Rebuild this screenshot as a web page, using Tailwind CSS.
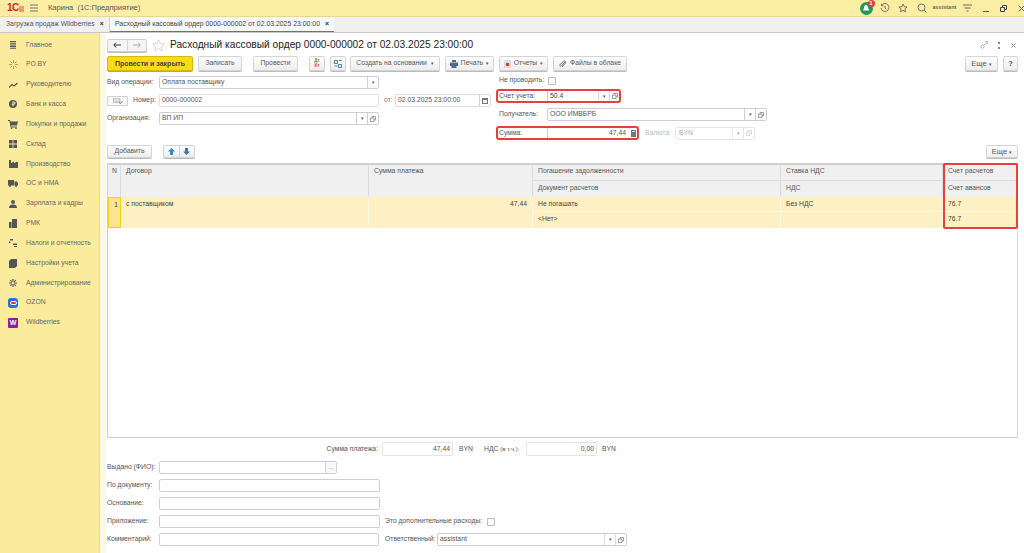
<!DOCTYPE html>
<html lang="ru">
<head>
  <meta charset="UTF-8" />
  <title>Расходный кассовый ордер</title>
  <script src="https://cdn.jsdelivr.net/npm/@tailwindcss/browser@4"></script>
</head>
<body class="w-[1024px] h-[553px] overflow-hidden bg-white flex flex-col font-['Liberation_Sans',Arial,sans-serif] text-[6.8px] leading-none whitespace-nowrap text-[#555]">

  <!-- Top bar -->
  <header class="h-[17px] shrink-0 bg-[#fbeea3] border-b border-[#e6d98f] flex items-center">
    <div class="w-[27px] pl-[7px] flex items-center">
      <span class="text-[#e2231a] font-bold text-[10px] tracking-[-0.5px]">1С</span>
      <svg class="w-[5px] h-[7px]" viewBox="0 0 5 7" fill="none" stroke="#e2231a" stroke-width="0.8"><path d="M0 2h5M0 4h5M0 6h5"/></svg>
    </div>
    <svg class="w-[10px] h-[8px] text-[#777] ml-[2px]" viewBox="0 0 10 8" fill="none" stroke="currentColor"><path d="M1 1h8M1 4h8M1 7h8"/></svg>
    <span class="ml-[9px] text-[7.5px] text-[#555]">Карина&nbsp; (1С:Предприятие)</span>
    <div class="ml-auto flex items-center h-full">
      <div class="relative w-[13px] h-[13px] rounded-full bg-[#1d9a5b] flex items-center justify-center mr-[7px]">
        <svg class="w-[8px] h-[8px]" viewBox="0 0 8 8" fill="#fff"><path d="M4 1C5.500 1 6 2.500 6 4l1.500 2.500H1L2 4C2 2.500 2.500 1 4 1z"/></svg>
        <span class="absolute -top-[2px] -right-[2px] w-[7px] h-[7px] rounded-full bg-[#e53935] text-white text-[6px] font-bold flex items-center justify-center">1</span>
      </div>
      <svg class="w-[10px] h-[10px] mr-[8px]" viewBox="0 0 10 10" fill="none" stroke="#666" stroke-width="0.9"><path d="M1.500 2.500A4 4 0 1 1 1 5M1.500 .8v2h2M5 2.800V5l1.500 1"/></svg>
      <svg class="w-[10px] h-[10px] mr-[9px]" viewBox="0 0 10 10" fill="none" stroke="#666" stroke-width="0.9"><path d="M5 1l1.200 2.700 2.900.3-2.200 1.900.7 2.900L5 7.300 2.400 8.800l.7-2.900L.9 4l2.900-.3z"/></svg>
      <svg class="w-[10px] h-[10px] mr-[6px]" viewBox="0 0 10 10" fill="none" stroke="#666" stroke-width="0.9"><circle cx="4.500" cy="4.500" r="3.500"/><path d="M7 7l2.500 2.500"/></svg>
      <span class="w-[30.5px] text-[5.5px] font-bold text-[#666]">assistant</span>
      <svg class="w-[9px] h-[8px] mr-[11px]" viewBox="0 0 9 8" fill="none" stroke="#666"><path d="M0 1h9M1.500 4h6M3.500 7h2"/></svg>
      <span class="w-[6px] h-[1px] bg-[#555] mt-[6px] mr-[11px]"></span>
      <svg class="w-[7px] h-[7px] mr-[11px]" viewBox="0 0 7 7" fill="none" stroke="#444"><path d="M.5 2.500h4v4h-4zM2.500 2.500v-2h4v4h-2"/></svg>
      <svg class="w-[7px] h-[7px] -mr-[1px]" viewBox="0 0 7 7" fill="none" stroke="#666"><path d="M.5.5l6 6M6.500.5l-6 6"/></svg>
    </div>
  </header>

  <!-- Tabs -->
  <nav class="h-[16px] shrink-0 bg-[#f0f0f0] border-b border-[#c8c8c8] flex">
    <div class="w-[110px] pl-[6px] flex items-center gap-[5px] border-r border-[#d0d0d0]">
      <span>Загрузка продаж Wildberries</span><span class="text-[#333] font-bold">×</span>
    </div>
    <div class="w-[224px] pl-[5px] bg-[#f8f8f8] border-b border-[#2b9a5e] flex items-center gap-[5px] text-[6.9px] text-[#444]">
      <span>Расходный кассовый ордер 0000-000002 от 02.03.2025 23:00:00</span><span class="text-[#333] font-bold">×</span>
    </div>
  </nav>

  <div class="flex-1 flex min-h-0">
    <!-- Sidebar -->
    <aside class="w-[100px] shrink-0 bg-[#fbeb9c] border-r border-[#eadb8f] pt-[2px] text-[#666]">
      <a class="h-[19.85px] flex items-center"><span class="w-[26px] flex justify-center"><svg class="w-[8px] h-[8px]" viewBox="0 0 8 8" fill="#555"><path d="M1 0h6v1H1zM1 1.700h6v1H1zM1 3.400h6v1H1zM1 5.100h6v1H1zM1 6.800h6v1H1z"/></svg></span>Главное</a>
      <a class="h-[19.85px] flex items-center"><span class="w-[26px] flex justify-center"><svg class="w-[9px] h-[9px]" viewBox="0 0 9 9" fill="none" stroke="#e8743b" stroke-width="0.8"><path d="M4.500 0v3M4.500 6v3M0 4.500h3M6 4.500h3M1.300 1.300l2 2M5.700 5.700l2 2M7.700 1.300l-2 2M3.300 5.700l-2 2"/></svg></span>РО.BY</a>
      <a class="h-[19.85px] flex items-center"><span class="w-[26px] flex justify-center"><svg class="w-[9px] h-[6px]" viewBox="0 0 9 6" fill="none" stroke="#555" stroke-width="1.200"><path d="M0 5.500l3-3 2 1.500 3.500-3"/></svg></span>Руководителю</a>
      <a class="h-[19.85px] flex items-center"><span class="w-[26px] flex justify-center"><span class="w-[8px] h-[8px] rounded-full bg-[#555] flex items-center justify-center text-[#fbeb9c] text-[6px] font-bold">₽</span></span>Банк и касса</a>
      <a class="h-[19.85px] flex items-center"><span class="w-[26px] flex justify-center"><svg class="w-[10px] h-[9px]" viewBox="0 0 10 9" fill="#555"><path d="M0 0h2l.5 1.500H10L9 5.500H3L3.300 6.500H9v1H2.500L1.500 1H0z"/><circle cx="3.500" cy="8.200" r=".8"/><circle cx="8" cy="8.200" r=".8"/></svg></span>Покупки и продажи</a>
      <a class="h-[19.85px] flex items-center"><span class="w-[26px] flex justify-center"><svg class="w-[8px] h-[8px]" viewBox="0 0 8 8" fill="#555"><path d="M0 0h3.600v3.600H0zM4.400 0H8v3.600H4.400zM0 4.400h3.600V8H0zM4.400 4.400H8V8H4.400z"/></svg></span>Склад</a>
      <a class="h-[19.85px] flex items-center"><span class="w-[26px] flex justify-center"><svg class="w-[9px] h-[8px]" viewBox="0 0 9 8" fill="#555"><path d="M0 8V0h2v3l3-1.500V3l4-1.500V8z"/></svg></span>Производство</a>
      <a class="h-[19.85px] flex items-center"><span class="w-[26px] flex justify-center"><svg class="w-[10px] h-[7px]" viewBox="0 0 10 7" fill="#555"><path d="M0 0h6v5.500H0zM6.500 1.500H9l1 2v2H6.500z"/><circle cx="2" cy="6" r="1"/><circle cx="8" cy="6" r="1"/></svg></span>ОС и НМА</a>
      <a class="h-[19.85px] flex items-center"><span class="w-[26px] flex justify-center"><svg class="w-[8px] h-[8px]" viewBox="0 0 8 8" fill="#555"><circle cx="4" cy="2" r="2"/><path d="M0 8c0-2.500 1.500-3.500 4-3.500S8 5.500 8 8z"/></svg></span>Зарплата и кадры</a>
      <a class="h-[19.85px] flex items-center"><span class="w-[26px] flex justify-center"><svg class="w-[8px] h-[9px]" viewBox="0 0 8 9" fill="#555"><path d="M3 0h5v9H3zM0 3h2.500v6H0z"/></svg></span>РМК</a>
      <a class="h-[19.85px] flex items-center"><span class="w-[26px] flex justify-center"><svg class="w-[8px] h-[8px]" viewBox="0 0 8 8" fill="#555"><path d="M1 0h3v1.500H1zM0 2.500h1.500V4H0zM4 4.500h4V6H4zM5 7h3v1H5z"/></svg></span>Налоги и отчетность</a>
      <a class="h-[19.85px] flex items-center"><span class="w-[26px] flex justify-center"><svg class="w-[8px] h-[9px]" viewBox="0 0 8 9" fill="#555"><path d="M0 2l2-2h6v7L6 9H0z"/></svg></span>Настройки учета</a>
      <a class="h-[19.85px] flex items-center"><span class="w-[26px] flex justify-center"><svg class="w-[8px] h-[8px]" viewBox="0 0 8 8" fill="none" stroke="#555"><circle cx="4" cy="4" r="2"/><path stroke-width="1.200" d="M4 0v1.500M4 6.500V8M0 4h1.500M6.500 4H8M1.200 1.200l1 1M5.800 5.800l1 1M6.800 1.200l-1 1M2.200 5.800l-1 1"/></svg></span>Администрирование</a>
      <a class="h-[19.85px] flex items-center"><span class="w-[26px] flex justify-center"><span class="w-[10px] h-[10px] rounded-[3px] bg-[#2a6fe0] flex items-center justify-center"><span class="w-[7px] h-[4px] rounded-full bg-[#e5323b] border border-white"></span></span></span>OZON</a>
      <a class="h-[19.85px] flex items-center"><span class="w-[26px] flex justify-center"><span class="w-[10px] h-[10px] rounded-[1px] bg-[#8e1f9a] text-white text-[7px] font-bold flex items-center justify-center">W</span></span>Wildberries</a>
    </aside>

    <div class="w-[6px] shrink-0 bg-[#fdf8e4]"></div>

    <!-- Form -->
    <main class="flex-1 min-w-0 pl-[1px] pr-[6px] flex flex-col">
      <!-- Title row -->
      <div class="h-[22px] flex items-center pt-[2px]">
        <div class="w-[40px] h-[13px] flex border border-[#cfcfcf] rounded-[2px] bg-[#f5f5f5] shadow-[0_1px_0_#bbb]">
          <span class="flex-1 flex items-center justify-center border-r border-[#d5d5d5]"><svg class="w-[8px] h-[6px]" viewBox="0 0 8 6" fill="none" stroke="#333"><path d="M8 3H1M3 .5L.8 3 3 5.500"/></svg></span>
          <span class="flex-1 flex items-center justify-center"><svg class="w-[8px] h-[6px]" viewBox="0 0 8 6" fill="none" stroke="#aaa"><path d="M0 3h7M5 .5L7.200 3 5 5.500"/></svg></span>
        </div>
        <svg class="w-[13px] h-[12px] ml-[5px]" viewBox="0 0 13 12" fill="none" stroke="#c8c8c8" stroke-width="0.8"><path d="M6.500.8l1.700 3.700 4 .4-3 2.700.9 4-3.600-2.100-3.600 2.100.9-4-3-2.700 4-.4z"/></svg>
        <h1 class="ml-[5px] text-[10.2px] text-[#222]">Расходный кассовый ордер 0000-000002 от 02.03.2025 23:00:00</h1>
        <div class="ml-auto flex items-center gap-[8px] mr-[2px]">
          <svg class="w-[8px] h-[8px]" viewBox="0 0 8 8" fill="none" stroke="#999" stroke-width="0.7"><path d="M3.500 4.500L7 1.500M5 .5h2.500V3M.5 5.500l2-2 2 2-2 2z"/></svg>
          <span class="w-[1px] h-[7px] border-l-2 border-dotted border-[#888] ml-[2px]"></span>
          <svg class="w-[5px] h-[5px] ml-[3px]" viewBox="0 0 5 5" fill="none" stroke="#888"><path d="M.5.5l4 4M4.500.5l-4 4"/></svg>
        </div>
      </div>

      <!-- Toolbar -->
      <div class="h-[15px] mt-[1px] flex">
        <button class="w-[86px] rounded-[2px] border border-[#d8b80a] bg-[#fbdc14] text-[#444] shadow-[0_1px_0_#c9ad10] font-bold text-[7px]">Провести и закрыть</button>
        <button class="w-[44px] ml-[5px] rounded-[2px] border border-[#d4d4d4] bg-linear-to-b from-white to-[#ededed] shadow-[0_1px_0_#bbb]">Записать</button>
        <button class="w-[45px] ml-[11px] rounded-[2px] border border-[#d4d4d4] bg-linear-to-b from-white to-[#ededed] shadow-[0_1px_0_#bbb]">Провести</button>
        <button class="w-[16px] ml-[11px] rounded-[2px] border border-[#d4d4d4] bg-linear-to-b from-white to-[#ededed] shadow-[0_1px_0_#bbb] flex flex-col items-center justify-center text-[4.5px] font-bold"><span class="text-[#2e9a4d]">Дт</span><span class="text-[#d8402f]">Кт</span></button>
        <button class="w-[16px] ml-[5px] rounded-[2px] border border-[#d4d4d4] bg-linear-to-b from-white to-[#ededed] shadow-[0_1px_0_#bbb] flex items-center justify-center"><svg class="w-[8px] h-[8px]" viewBox="0 0 8 8" fill="none" stroke="#3f7fb5"><path d="M.5.5h3v3h-3zM4.500 4.500h3v3h-3zM5 .5h2.500M.5 6h3"/></svg></button>
        <button class="w-[90px] ml-[4px] rounded-[2px] border border-[#d4d4d4] bg-linear-to-b from-white to-[#ededed] shadow-[0_1px_0_#bbb]">Создать на основании&nbsp; <span class="text-[5px]">▾</span></button>
        <button class="w-[49px] ml-[5px] rounded-[2px] border border-[#d4d4d4] bg-linear-to-b from-white to-[#ededed] shadow-[0_1px_0_#bbb] flex items-center justify-center gap-[3px]"><svg class="w-[8px] h-[8px]" viewBox="0 0 8 8" fill="#4d6d8a"><path d="M2 0h4v2H2zM0 2.500h8V6H6.500v2h-5V6H0z"/></svg>Печать <span class="text-[5px]">▾</span></button>
        <button class="w-[49px] ml-[5px] rounded-[2px] border border-[#d4d4d4] bg-linear-to-b from-white to-[#ededed] shadow-[0_1px_0_#bbb] flex items-center justify-center gap-[3px]"><svg class="w-[7px] h-[8px]" viewBox="0 0 7 8"><path d="M0 0h7v8H0z" fill="#ddd"/><path d="M2 3h3v3H2z" fill="#d8402f"/></svg>Отчеты <span class="text-[5px]">▾</span></button>
        <button class="w-[74px] ml-[5px] rounded-[2px] border border-[#d4d4d4] bg-linear-to-b from-white to-[#ededed] shadow-[0_1px_0_#bbb] flex items-center justify-center gap-[4px]"><svg class="w-[7px] h-[8px]" viewBox="0 0 7 8" fill="none" stroke="#777"><path d="M6 2L2.500 6a1 1 0 0 1-1.500-1.300L4.500 1A1.500 1.500 0 0 1 6.500 3L3 7"/></svg>Файлы в облаке</button>
        <button class="w-[33px] ml-auto rounded-[2px] border border-[#d4d4d4] bg-linear-to-b from-white to-[#ededed] shadow-[0_1px_0_#bbb] text-[7.5px]">Еще <span class="text-[5px]">▾</span></button>
        <button class="w-[15px] ml-[5px] rounded-[2px] border border-[#d4d4d4] bg-linear-to-b from-white to-[#ededed] shadow-[0_1px_0_#bbb] font-bold text-[7.5px]">?</button>
      </div>

      <!-- Header fields -->
      <div class="flex mt-[4px] h-[71px]">
        <div class="w-[390px] shrink-0 flex flex-col gap-[5px] pt-[1px]">
          <div class="flex items-center h-[13px]">
            <span class="w-[52px]">Вид операции:</span>
            <div class="w-[220px] h-[13px] flex border border-[#cfcfcf] rounded-[2px] items-center"><span class="flex-1 pl-[2px]">Оплата поставщику</span><span class="w-[11px] h-full border-l border-[#cfcfcf] flex items-center justify-center text-[5px]">▾</span></div>
          </div>
          <div class="flex items-center h-[13px]">
            <button class="w-[21px] h-[10px] border border-[#cfcfcf] rounded-[1px] flex items-center justify-center bg-[#fafafa]"><svg class="w-[10px] h-[6px]" viewBox="0 0 10 6"><path d="M0 0h7v4.500H0z" fill="#ddd" stroke="#999" stroke-width=".5"/><path d="M6 4.500l1.500 1 2-2.500" fill="none" stroke="#2e9a4d"/></svg></button>
            <span class="w-[31px] pl-[5px]">Номер:</span>
            <div class="w-[220px] h-[13px] flex border border-[#e2e2e2] rounded-[2px] items-center pl-[2px]">0000-000002</div>
            <span class="ml-[5px] w-[11px] text-[#777]">от:</span>
            <div class="w-[96px] h-[13px] flex border border-[#dcdcdc] rounded-[2px] items-center shrink-0"><span class="flex-1 pl-[2px]">02.03.2025 23:00:00</span><span class="w-[11px] h-full border-l border-[#cfcfcf] flex items-center justify-center"><svg class="w-[6px] h-[6px]" viewBox="0 0 6 6"><path d="M0 0h6v6H0z" fill="#777"/><path d="M1 2h4v3H1z" fill="#eee"/></svg></span></div>
          </div>
          <div class="flex items-center h-[13px]">
            <span class="w-[52px]">Организация:</span>
            <div class="w-[220px] h-[13px] flex border border-[#cfcfcf] rounded-[2px] items-center"><span class="flex-1 pl-[2px]">ВП ИП</span><span class="w-[11px] h-full border-l border-[#cfcfcf] flex items-center justify-center text-[5px]">▾</span><span class="w-[11px] h-full border-l border-[#cfcfcf] flex items-center justify-center"><svg class="w-[6px] h-[6px]" viewBox="0 0 6 6" fill="none" stroke="#777" stroke-width=".7"><path d="M.5 2h3.500v3.500H.5zM2 2V.5h3.500V4H4"/></svg></span></div>
          </div>
        </div>
        <div class="flex-1 flex flex-col">
          <div class="h-[13px] flex items-center mt-[-1px]">
            <span class="w-[51px] pl-[2px]">Не проводить:</span>
            <span class="w-[8px] h-[8px] border border-[#bbb] rounded-[1px]"></span>
          </div>
          <div class="h-[12px] mt-[3px] flex items-center w-[123px] outline-2 -outline-offset-1 outline-[#e8403a] rounded-[2px]">
            <span class="w-[50px] pl-[2px]">Счет учета:</span>
            <div class="flex-1 h-full flex border-l border-[#cfcfcf] items-center"><span class="flex-1 pl-[2px] text-[#444]">50.4</span><span class="w-[11px] h-full border-l border-[#dcdcdc] flex items-center justify-center text-[5px]">▾</span><span class="w-[11px] h-full border-l border-[#dcdcdc] flex items-center justify-center"><svg class="w-[6px] h-[6px]" viewBox="0 0 6 6" fill="none" stroke="#777" stroke-width=".7"><path d="M.5 2h3.500v3.500H.5zM2 2V.5h3.500V4H4"/></svg></span></div>
          </div>
          <div class="h-[13px] mt-[6px] flex items-center">
            <span class="w-[50px] pl-[2px]">Получатель:</span>
            <div class="w-[220px] h-[13px] flex border border-[#cfcfcf] rounded-[2px] items-center"><span class="flex-1 pl-[2px]">ООО ИМВБРБ</span><span class="w-[11px] h-full border-l border-[#cfcfcf] flex items-center justify-center text-[5px]">▾</span><span class="w-[11px] h-full border-l border-[#cfcfcf] flex items-center justify-center"><svg class="w-[6px] h-[6px]" viewBox="0 0 6 6" fill="none" stroke="#777" stroke-width=".7"><path d="M.5 2h3.500v3.500H.5zM2 2V.5h3.500V4H4"/></svg></span></div>
          </div>
          <div class="h-[12px] mt-[6px] flex items-center">
            <div class="w-[141px] h-full flex items-center outline-2 -outline-offset-1 outline-[#e8403a] rounded-[2px]">
              <span class="w-[50px] pl-[2px]">Сумма:</span>
              <div class="flex-1 h-full flex border-l border-[#cfcfcf] items-center"><span class="flex-1 text-right pr-[2px]">47,44</span><span class="w-[10px] flex items-center justify-center"><svg class="w-[5px] h-[7px]" viewBox="0 0 5 7"><path d="M0 0h5v7H0z" fill="#777"/><path d="M1 1h3v1H1z" fill="#eee"/></svg></span></div>
            </div>
            <span class="ml-[7px] w-[30px] text-[#bbb]">Валюта:</span>
            <div class="w-[80px] h-[13px] flex border border-[#e6e6e6] rounded-[2px] items-center text-[#aaa]"><span class="flex-1 pl-[3px]">BYN</span><span class="w-[11px] h-full border-l border-[#e6e6e6] flex items-center justify-center text-[5px]">▾</span><span class="w-[11px] h-full border-l border-[#e6e6e6] flex items-center justify-center"><svg class="w-[6px] h-[6px]" viewBox="0 0 6 6" fill="none" stroke="#ccc" stroke-width=".7"><path d="M.5 2h3.500v3.500H.5zM2 2V.5h3.500V4H4"/></svg></span></div>
          </div>
        </div>
      </div>

      <!-- Table commands -->
      <div class="h-[13px] mt-[-1px] flex">
        <button class="w-[45px] rounded-[2px] border border-[#d4d4d4] bg-linear-to-b from-white to-[#ededed] shadow-[0_1px_0_#bbb]">Добавить</button>
        <div class="w-[32px] ml-[11px] flex rounded-[2px] border border-[#d4d4d4] bg-linear-to-b from-white to-[#ededed] shadow-[0_1px_0_#bbb]">
          <span class="flex-1 flex items-center justify-center border-r border-[#d4d4d4]"><svg class="w-[7px] h-[7px]" viewBox="0 0 7 7" fill="#3c87c7"><path d="M3.500 0L7 3.500H5V7H2V3.500H0z"/></svg></span>
          <span class="flex-1 flex items-center justify-center"><svg class="w-[7px] h-[7px]" viewBox="0 0 7 7" fill="#3c78b5"><path d="M3.500 7L0 3.500h2V0h3v3.500h2z"/></svg></span>
        </div>
        <button class="w-[32px] ml-auto rounded-[2px] border border-[#d4d4d4] bg-linear-to-b from-white to-[#ededed] shadow-[0_1px_0_#bbb] text-[7.5px]">Еще <span class="text-[5px]">▾</span></button>
      </div>

      <!-- Table -->
      <div class="relative h-[275px] mt-[5px] border border-t-2 border-[#cfcfcf] border-r-[#d8d8d8]">
        <div class="grid grid-cols-[13px_248px_164px_248px_162px_74px] grid-rows-[16px_16px_15px_16px]">
          <div class="row-span-2 bg-[#f0f0f0] border-r border-[#dcdcdc] pl-[4px] pt-[3px]">N</div>
          <div class="row-span-2 bg-[#f0f0f0] border-r border-[#dcdcdc] pl-[5px] pt-[3px]">Договор</div>
          <div class="row-span-2 bg-[#f0f0f0] border-r border-[#dcdcdc] pl-[5px] pt-[3px]">Сумма платежа</div>
          <div class="bg-[#f0f0f0] border-r border-b border-[#dcdcdc] pl-[5px] pt-[3px]">Погашение задолженности</div>
          <div class="bg-[#f0f0f0] border-r border-b border-[#dcdcdc] pl-[5px] pt-[3px]">Ставка НДС</div>
          <div class="bg-[#f0f0f0] border-b border-[#dcdcdc] pl-[5px] pt-[3px]">Счет расчетов</div>
          <div class="bg-[#f0f0f0] border-r border-[#dcdcdc] pl-[5px] pt-[4px]">Документ расчетов</div>
          <div class="bg-[#f0f0f0] border-r border-[#dcdcdc] pl-[5px] pt-[4px]">НДС</div>
          <div class="bg-[#f0f0f0] pl-[5px] pt-[4px]">Счет авансов</div>

          <div class="row-span-2 bg-[#fbe48f] border border-[#f5d21c] text-right pr-[2px] pt-[4px] text-[#444]">1</div>
          <div class="row-span-2 bg-[#fdf1c4] border-r border-[#fef8e2] pl-[5px] pt-[4px] text-[#444]">с поставщиком</div>
          <div class="row-span-2 bg-[#fdf1c4] border-r border-[#fef8e2] pr-[5px] pt-[4px] text-right text-[#444]">47,44</div>
          <div class="bg-[#fdf1c4] border-r border-b border-[#fef8e2] pl-[5px] pt-[4px] text-[#444]">Не погашать</div>
          <div class="bg-[#fdf1c4] border-r border-b border-[#fef8e2] pl-[5px] pt-[4px] text-[#444]">Без НДС</div>
          <div class="bg-[#fdf1c4] border-b border-[#fef8e2] pl-[5px] pt-[4px] text-[#444]">76.7</div>
          <div class="bg-[#fdf1c4] border-r border-[#fef8e2] pl-[5px] pt-[4px] text-[#444]">&lt;Нет&gt;</div>
          <div class="bg-[#fdf1c4] border-r border-[#fef8e2]"></div>
          <div class="bg-[#fdf1c4] pl-[5px] pt-[4px] text-[#444]">76.7</div>
        </div>
        <div class="absolute left-[835px] -top-[2px] w-[75px] h-[66px] border-2 border-[#e8403a] rounded-[2px]"></div>
      </div>

      <!-- Totals -->
      <div class="h-[14px] mt-[4px] flex items-center">
        <span class="w-[275px] text-right pr-[4px]">Сумма платежа:</span>
        <div class="w-[71px] h-[14px] border border-[#e4e4e4] rounded-[2px] flex items-center justify-end pr-[2px]">47,44</div>
        <span class="ml-[6px] w-[25px]">BYN</span>
        <span class="w-[42px]">НДС <span class="text-[6px]">(в т.ч.):</span></span>
        <div class="w-[71px] h-[14px] border border-[#e4e4e4] rounded-[2px] flex items-center justify-end pr-[2px]">0,00</div>
        <span class="ml-[5px]">BYN</span>
      </div>

      <!-- Footer fields -->
      <div class="flex flex-col gap-[5px] mt-[5px]">
        <div class="flex items-center h-[13px]">
          <span class="w-[52px]">Выдано (ФИО):</span>
          <div class="w-[178px] h-[13px] flex border border-[#cfcfcf] rounded-[2px] items-center"><span class="flex-1"></span><span class="w-[11px] h-full border-l border-[#cfcfcf] bg-[#f8f8f8] flex items-center justify-center text-[#999]">...</span></div>
        </div>
        <div class="flex items-center h-[13px]">
          <span class="w-[52px]">По документу:</span>
          <div class="w-[221px] h-[13px] border border-[#cfcfcf] rounded-[2px]"></div>
        </div>
        <div class="flex items-center h-[13px]">
          <span class="w-[52px]">Основание:</span>
          <div class="w-[221px] h-[13px] border border-[#cfcfcf] rounded-[2px]"></div>
        </div>
        <div class="flex items-center h-[13px]">
          <span class="w-[52px]">Приложение:</span>
          <div class="w-[221px] h-[13px] border border-[#cfcfcf] rounded-[2px]"></div>
          <span class="ml-[5px] w-[102px]">Это дополнительные расходы:</span>
          <span class="w-[8px] h-[8px] border border-[#bbb] rounded-[1px]"></span>
        </div>
        <div class="flex items-center h-[13px]">
          <span class="w-[52px]">Комментарий:</span>
          <div class="w-[220px] h-[13px] border border-[#cfcfcf] rounded-[2px]"></div>
          <span class="ml-[6px] w-[52px]">Ответственный:</span>
          <div class="w-[190px] h-[13px] flex border border-[#cfcfcf] rounded-[2px] items-center"><span class="flex-1 pl-[2px]">assistant</span><span class="w-[11px] h-full border-l border-[#dcdcdc] flex items-center justify-center text-[5px]">▾</span><span class="w-[11px] h-full border-l border-[#dcdcdc] flex items-center justify-center"><svg class="w-[6px] h-[6px]" viewBox="0 0 6 6" fill="none" stroke="#777" stroke-width=".7"><path d="M.5 2h3.500v3.500H.5zM2 2V.5h3.500V4H4"/></svg></span></div>
        </div>
      </div>
    </main>
  </div>
</body>
</html>
